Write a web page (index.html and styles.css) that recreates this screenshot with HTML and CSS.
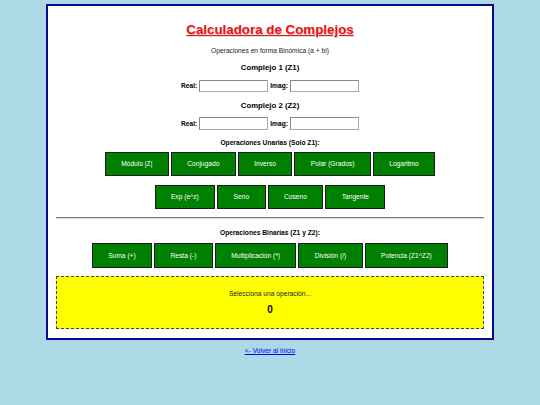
FILE: index.html
```html
<!DOCTYPE html>
<html lang="es">
<head>
<meta charset="utf-8">
<title>Calculadora de Complejos</title>
<link rel="stylesheet" href="styles.css">
</head>
<body>
<div class="container">
  <h1 class="title">Calculadora de Complejos</h1>
  <p class="subtitle">Operaciones en forma Binómica (a + bi)</p>

  <h3 class="cx-title">Complejo 1 (Z1)</h3>
  <div class="input-row">
    <label class="lbl">Real:</label><input class="num" type="text">
    <label class="lbl">Imag:</label><input class="num" type="text">
  </div>

  <h3 class="cx-title cx-title-2">Complejo 2 (Z2)</h3>
  <div class="input-row">
    <label class="lbl">Real:</label><input class="num" type="text">
    <label class="lbl">Imag:</label><input class="num" type="text">
  </div>

  <h4 class="section-title unary-title">Operaciones Unarias (Solo Z1):</h4>
  <div class="btn-row row-1">
    <button class="op">Módulo |Z|</button>
    <button class="op">Conjugado</button>
    <button class="op">Inverso</button>
    <button class="op">Polar (Grados)</button>
    <button class="op">Logaritmo</button>
  </div>
  <div class="btn-row row-2">
    <button class="op">Exp (e^z)</button>
    <button class="op">Seno</button>
    <button class="op">Coseno</button>
    <button class="op">Tangente</button>
  </div>

  <hr class="divider">

  <h4 class="section-title binary-title">Operaciones Binarias (Z1 y Z2):</h4>
  <div class="btn-row row-3">
    <button class="op">Suma (+)</button>
    <button class="op">Resta (-)</button>
    <button class="op">Multiplicación (*)</button>
    <button class="op">División (/)</button>
    <button class="op">Potencia (Z1^Z2)</button>
  </div>

  <div class="result">
    <p class="result-msg">Selecciona una operación...</p>
    <p class="result-val">0</p>
  </div>
</div>
<div class="back">
  <a class="back-link" href="#">&lt;- Volver al inicio</a>
</div>
</body>
</html>
```

FILE: styles.css
```css
html, body {
  margin: 0;
  padding: 0;
}
body {
  background: #add8e6;
  font-family: "Liberation Sans", Arial, sans-serif;
  font-size: 6.67px;
  color: #000;
}
.container {
  box-sizing: border-box;
  width: 448px;
  margin: 4px auto 0;
  padding: 8px 8px 9.3px;
  background: #fff;
  border: 2px solid #0a0a8a;
  text-align: center;
}
.title {
  margin: 8px 0 0;
  font-size: 13.33px;
  line-height: 16px;
  font-weight: bold;
  color: #ee1111;
  text-decoration: underline;
  text-shadow: 0.5px 0.5px 1px rgba(0, 0, 0, 0.25);
}
.subtitle {
  margin: 9px 0 0;
  font-size: 6.67px;
  line-height: 8px;
  color: #222;
}
.cx-title {
  margin: 8px 0 0;
  font-size: 7.8px;
  line-height: 9px;
  font-weight: bold;
}
.cx-title-2 {
  margin-top: 9px;
}
.input-row {
  display: flex;
  justify-content: center;
  align-items: center;
  gap: 2px;
  margin-top: 7.5px;
  height: 12.4px;
}
.lbl {
  font-weight: bold;
  font-size: 6.67px;
  line-height: 8px;
}
.num {
  box-sizing: border-box;
  width: 69px;
  height: 12.4px;
  margin: 0;
  padding: 0 2px;
  border: 1px solid #a9a9a9;
  border-top-color: #8a8a8a;
  border-left-color: #8a8a8a;
  background: #fff;
  font-size: 6.67px;
}
.section-title {
  margin: 9px 0 0;
  font-size: 6.67px;
  line-height: 8px;
  font-weight: bold;
}
.binary-title {
  margin-top: 10.5px;
}
.btn-row {
  display: flex;
  justify-content: center;
  gap: 2px;
}
.row-1 {
  margin-top: 5.2px;
}
.row-2 {
  margin-top: 8.4px;
}
.row-3 {
  margin-top: 6px;
}
.op {
  box-sizing: border-box;
  height: 24.2px;
  margin: 0;
  padding: 0 15.4px;
  background: #008000;
  color: #fff;
  border: 1px solid #1c1c1c;
  font-family: "Liberation Sans", Arial, sans-serif;
  font-size: 6.67px;
  line-height: 8px;
}
.divider {
  margin: 8.2px 0 0;
  height: 0;
  border: 0;
  border-top: 1px solid #808080;
  border-bottom: 1px solid #d6d6d6;
}
.result {
  margin-top: 8.3px;
  box-sizing: border-box;
  height: 53px;
  padding-top: 12.7px;
  background: #ffff00;
  border: 1px dashed #444;
}
.result-msg {
  margin: 0;
  font-size: 6.67px;
  line-height: 8px;
  color: #222;
}
.result-val {
  margin: 6px 0 0;
  font-size: 10px;
  line-height: 12px;
  font-weight: bold;
}
.back {
  margin-top: 6.9px;
  text-align: center;
  line-height: 8px;
}
.back-link {
  color: #0000ee;
  text-decoration: underline;
  font-size: 6.67px;
}
```
